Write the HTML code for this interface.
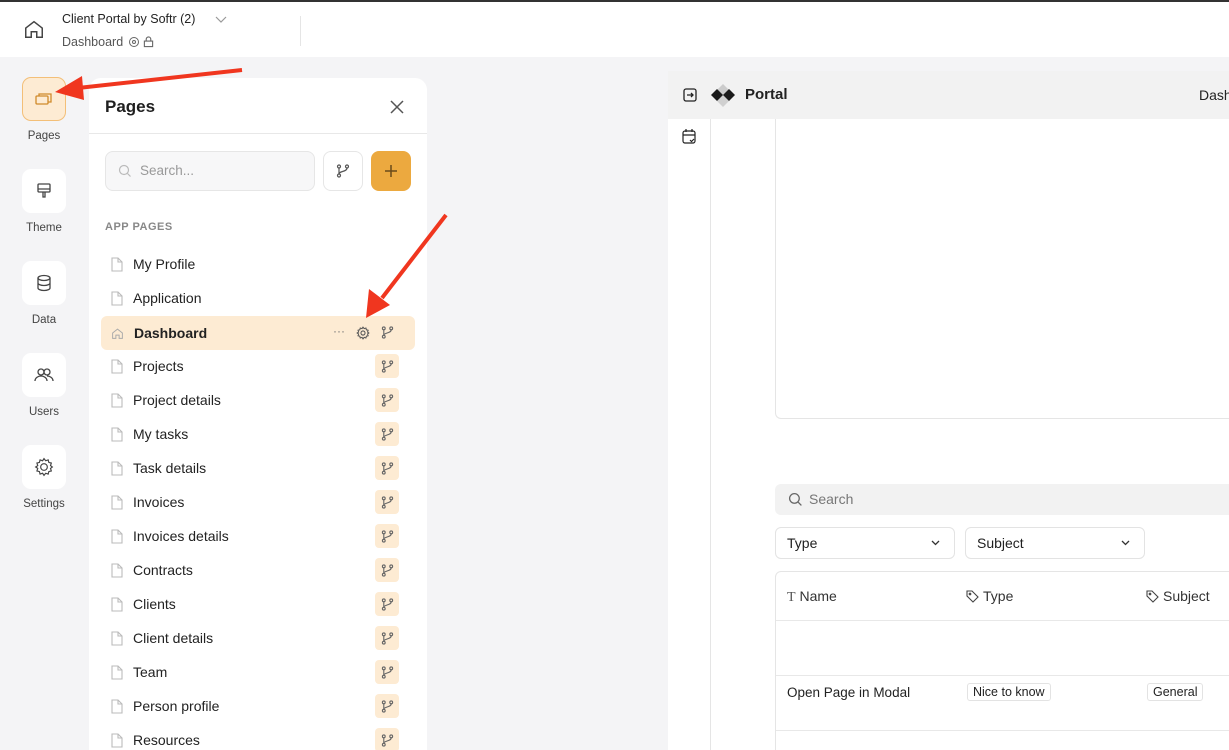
<!DOCTYPE html>
<html style="width:1229px;height:750px;overflow:hidden"><head><meta charset="utf-8"><style>
*{box-sizing:border-box;margin:0;padding:0}
body{width:1229px;height:750px;overflow:hidden;background:#f4f4f6;font-family:"Liberation Sans",sans-serif;color:#1f1f1f;position:relative}
.top{position:absolute;left:0;top:0;width:1229px;height:57px;background:#fff;border-top:2px solid #333}
.abs{position:absolute}
.nav{position:absolute;left:22px;width:44px;height:44px;border-radius:9px;background:#fff;display:flex;align-items:center;justify-content:center}
.navl{position:absolute;width:88px;left:0;text-align:center;font-size:11.5px;color:#444}
.panel{position:absolute;left:89px;top:78px;width:338px;height:672px;background:#fff;border-radius:12px 12px 0 0;overflow:hidden}
.row{position:absolute;left:12px;width:314px;height:34px;display:flex;align-items:center;font-size:14px;color:#222}
.row svg.f{margin-left:10px;margin-right:10px}
.badge{position:absolute;right:16px;top:5px;width:24px;height:24px;border-radius:4px;background:#fdebd3;display:flex;align-items:center;justify-content:center}
.main{position:absolute;left:668px;top:71px;width:561px;height:679px;background:#fff;overflow:hidden}
</style></head><body>
<div class="top">
<svg class="abs" style="left:23px;top:16px" width="22" height="22" viewBox="0 0 24 24" fill="none" stroke="#444" stroke-width="1.6"><path d="M3 11l9-7 9 7v10h-6v-6h-6v6H3z"/></svg>
<div class="abs" style="left:62px;top:10px;font-size:12.5px;color:#222">Client Portal by Softr (2)</div>
<svg class="abs" style="left:215px;top:14px" width="12" height="8" viewBox="0 0 12 8" fill="none" stroke="#999" stroke-width="1.2"><path d="M1 1l5 5 5-5"/></svg>
<div class="abs" style="left:62px;top:33px;font-size:12.5px;color:#555">Dashboard</div>
<svg class="abs" style="left:128px;top:34px" width="12" height="12" viewBox="0 0 24 24" fill="none" stroke="#666" stroke-width="2"><circle cx="12" cy="12" r="3"/><circle cx="12" cy="12" r="9"/></svg>
<svg class="abs" style="left:143px;top:34px" width="11" height="12" viewBox="0 0 12 12" fill="none" stroke="#666" stroke-width="1.2"><rect x="1.5" y="5" width="9" height="6"/><path d="M3.5 5V3a2.5 2.5 0 015 0v2"/></svg>
<div class="abs" style="left:300px;top:14px;width:1px;height:30px;background:#e5e5e5"></div>
</div>

<div class="nav" style="top:77px;background:#fdebd3;border:1px solid #f3bf78"><svg width="18" height="16" viewBox="0 0 18 16" fill="none" stroke="#d08a2a" stroke-width="1.3"><rect x="1" y="5" width="12" height="8" rx="1"/><path d="M4 5V3h12v8h-3"/></svg></div>
<div class="navl" style="top:130px">Pages</div>
<div class="nav" style="top:169px"><svg width="18" height="18" viewBox="0 0 18 18" fill="none" stroke="#444" stroke-width="1.3"><rect x="3" y="2" width="12" height="8" rx="1"/><path d="M3 7h12M8 10v5h2v-5"/></svg></div>
<div class="navl" style="top:222px">Theme</div>
<div class="nav" style="top:261px"><svg width="18" height="18" viewBox="0 0 18 18" fill="none" stroke="#444" stroke-width="1.3"><ellipse cx="9" cy="4" rx="6" ry="2.5"/><path d="M3 4v10c0 1.4 2.7 2.5 6 2.5s6-1.1 6-2.5V4M3 9c0 1.4 2.7 2.5 6 2.5s6-1.1 6-2.5"/></svg></div>
<div class="navl" style="top:314px">Data</div>
<div class="nav" style="top:353px"><svg width="20" height="16" viewBox="0 0 20 16" fill="none" stroke="#444" stroke-width="1.3"><circle cx="7" cy="5" r="3"/><circle cx="13" cy="5" r="3"/><path d="M1 14c0-3 3-5 6-5s6 2 6 5M13 9c3 0 6 2 6 5"/></svg></div>
<div class="navl" style="top:406px">Users</div>
<div class="nav" style="top:445px"><svg width="20" height="20" viewBox="0 0 24 24" fill="none" stroke="#444" stroke-width="1.4"><circle cx="12" cy="12" r="4"/><path d="M12 2l2 2.5 3-1 .8 3 3 .8-1 3L22 12l-2.2 1.7 1 3-3 .8-.8 3-3-1L12 22l-1.7-2.5-3 1-.8-3-3-.8 1-3L2 12l2.5-1.7-1-3 3-.8.8-3 3 1z"/></svg></div>
<div class="navl" style="top:498px">Settings</div>

<div class="panel">
<div class="abs" style="left:16px;top:19px;font-size:17px;font-weight:bold">Pages</div>
<svg class="abs" style="left:300px;top:21px" width="16" height="16" viewBox="0 0 16 16" stroke="#555" stroke-width="1.5"><path d="M2 2l12 12M14 2L2 14"/></svg>
<div class="abs" style="left:0;top:55px;width:338px;height:1px;background:#e8e8e8"></div>
<div class="abs" style="left:16px;top:73px;width:210px;height:40px;border:1px solid #e6e6e6;border-radius:8px;background:#f7f7f8"></div>
<svg class="abs" style="left:29px;top:86px" width="14" height="14" viewBox="0 0 14 14" fill="none" stroke="#bbb" stroke-width="1.2"><circle cx="6" cy="6" r="4.5"/><path d="M9.5 9.5l3 3"/></svg>
<div class="abs" style="left:51px;top:85px;font-size:13.5px;color:#999">Search...</div>
<div class="abs" style="left:234px;top:73px;width:40px;height:40px;border:1px solid #e6e6e6;border-radius:8px;display:flex;align-items:center;justify-content:center"><svg width="14" height="14" viewBox="0 0 14 14" fill="none" stroke="#555" stroke-width="1.2"><circle cx="3" cy="2.5" r="1.5"/><circle cx="3" cy="11.5" r="1.5"/><circle cx="11" cy="2.5" r="1.5"/><path d="M3 4v6M11 4c0 4-8 3-8 6"/></svg></div>
<div class="abs" style="left:282px;top:73px;width:40px;height:40px;border-radius:8px;background:#eca93f;display:flex;align-items:center;justify-content:center"><svg width="14" height="14" viewBox="0 0 14 14" stroke="#6a4a1a" stroke-width="1.5"><path d="M7 1v12M1 7h12"/></svg></div>
<div class="abs" style="left:16px;top:143px;font-size:11px;font-weight:bold;color:#888;letter-spacing:.5px">APP PAGES</div>
<div id="rows"></div>
</div>

<div class="main">
<div class="abs" style="left:0;top:0;width:561px;height:48px;background:#f2f2f2"></div>
<svg class="abs" style="left:15px;top:17px" width="14" height="14" viewBox="0 0 14 14" fill="none" stroke="#222" stroke-width="1.3"><rect x="1" y="1" width="12" height="12" rx="2"/><path d="M4 7h6M8 5l2 2-2 2"/></svg>
<svg class="abs" style="left:42px;top:12px" width="26" height="26" viewBox="0 0 26 26"><path d="M13 1l6 6-6 6-6-6z" fill="#ccc"/><path d="M13 12l6 6-6 6-6-6z" fill="#d0d0d0"/><path d="M7 6l6 6-6 6-6-6z" fill="#1a1a1a"/><path d="M19 6l6 6-6 6-6-6z" fill="#1a1a1a"/></svg>
<div class="abs" style="left:77px;top:15px;font-size:15px;font-weight:bold;color:#222">Portal</div>
<div class="abs" style="left:531px;top:16px;font-size:14px;color:#222">Dash</div>
<svg class="abs" style="left:14px;top:57px" width="14" height="16" viewBox="0 0 14 16" fill="none" stroke="#222" stroke-width="1.2"><rect x="1" y="3" width="12" height="12" rx="2"/><path d="M1 7h12M4 1v3M10 1v3M8 12l1.5 1.5L12 11"/></svg>
<div class="abs" style="left:42px;top:48px;width:1px;height:631px;background:#e5e5e5"></div>
<div class="abs" style="left:107px;top:48px;width:460px;height:300px;border-left:1px solid #e5e5e5;border-bottom:1px solid #e5e5e5;border-bottom-left-radius:6px"></div>
<div class="abs" style="left:107px;top:413px;width:454px;height:31px;background:#f2f2f2;border-radius:6px 0 0 6px"></div>
<svg class="abs" style="left:120px;top:421px" width="15" height="15" viewBox="0 0 14 14" fill="none" stroke="#666" stroke-width="1.2"><circle cx="6" cy="6" r="4.5"/><path d="M9.5 9.5l3 3"/></svg>
<div class="abs" style="left:141px;top:420px;font-size:14px;color:#777">Search</div>
<div class="abs" style="left:107px;top:456px;width:180px;height:32px;border:1px solid #e3e3e3;border-radius:6px"></div>
<div class="abs" style="left:119px;top:464px;font-size:14px">Type</div>
<svg class="abs" style="left:263px;top:469px" width="9" height="6" viewBox="0 0 9 6" fill="none" stroke="#333" stroke-width="1.3"><path d="M1 1l3.5 3.5L8 1"/></svg>
<div class="abs" style="left:297px;top:456px;width:180px;height:32px;border:1px solid #e3e3e3;border-radius:6px"></div>
<div class="abs" style="left:309px;top:464px;font-size:14px">Subject</div>
<svg class="abs" style="left:453px;top:469px" width="9" height="6" viewBox="0 0 9 6" fill="none" stroke="#333" stroke-width="1.3"><path d="M1 1l3.5 3.5L8 1"/></svg>
<div class="abs" style="left:107px;top:500px;width:470px;height:200px;border:1px solid #e5e5e5;border-radius:6px 0 0 0"></div>
<div class="abs" style="left:108px;top:549px;width:453px;height:1px;background:#e8e8e8"></div>
<div class="abs" style="left:108px;top:604px;width:453px;height:1px;background:#e8e8e8"></div>
<div class="abs" style="left:108px;top:659px;width:453px;height:1px;background:#e8e8e8"></div>
<div class="abs" style="left:119px;top:517px;font-size:14px;color:#333"><span style="font-family:'Liberation Serif';color:#555">T</span> Name</div>
<svg class="abs" style="left:298px;top:519px" width="13" height="13" viewBox="0 0 13 13" fill="none" stroke="#444" stroke-width="1.1"><path d="M1 1h5l6 6-5 5-6-6z"/><circle cx="4" cy="4" r=".8"/></svg>
<div class="abs" style="left:315px;top:517px;font-size:14px;color:#333">Type</div>
<svg class="abs" style="left:478px;top:519px" width="13" height="13" viewBox="0 0 13 13" fill="none" stroke="#444" stroke-width="1.1"><path d="M1 1h5l6 6-5 5-6-6z"/><circle cx="4" cy="4" r=".8"/></svg>
<div class="abs" style="left:495px;top:517px;font-size:14px;color:#333">Subject</div>
<div class="abs" style="left:119px;top:614px;font-size:13.5px;color:#222">Open Page in Modal</div>
<div class="abs" style="left:299px;top:612px;padding:1px 5px;border:1px solid #e3e3e3;border-radius:3px;font-size:12.5px">Nice to know</div>
<div class="abs" style="left:479px;top:612px;padding:1px 5px;border:1px solid #e3e3e3;border-radius:3px;font-size:12.5px">General</div>
</div>

<svg class="abs" style="left:0;top:0" width="1229" height="750">
<path d="M242 70L78 88" stroke="#f0361f" stroke-width="4"/>
<path d="M55 92L82 76L84 100z" fill="#f0361f"/>
<path d="M446 215L382 298" stroke="#f0361f" stroke-width="4"/>
<path d="M366 318L369 289L390 305z" fill="#f0361f"/>
</svg>

<script>
var names=["My Profile","Application","Dashboard","Projects","Project details","My tasks","Task details","Invoices","Invoices details","Contracts","Clients","Client details","Team","Person profile","Resources"];
var br='<svg width="13" height="13" viewBox="0 0 14 14" fill="none" stroke="#666" stroke-width="1.2"><circle cx="3" cy="2.5" r="1.5"/><circle cx="3" cy="11.5" r="1.5"/><circle cx="11" cy="2.5" r="1.5"/><path d="M3 4v6M11 4c0 4-8 3-8 6"/></svg>';
var file='<svg class="f" width="12" height="15" viewBox="0 0 12 15" fill="none" stroke="#bbb" stroke-width="1.1"><path d="M1 1h6l4 4v9H1z"/><path d="M7 1v4h4"/></svg>';
var home='<svg class="f" width="13" height="13" viewBox="0 0 24 24" fill="none" stroke="#aaa" stroke-width="1.8"><path d="M3 11l9-7 9 7v10h-6v-6h-6v6H3z"/></svg>';
var h='';
names.forEach(function(n,i){var top=169+34*i;
if(i==2){h+='<div class="row" style="top:'+(top+1)+'px;background:#fdebd3;border-radius:6px;font-weight:bold">'+home+n+'<span class="abs" style="left:232px;top:8px;color:#777;font-weight:normal;font-size:12px">···</span><svg class="abs" style="left:255px;top:10px" width="14" height="14" viewBox="0 0 24 24" fill="none" stroke="#555" stroke-width="1.8"><circle cx="12" cy="12" r="3.5"/><path d="M12 2l2 2.5 3-1 .8 3 3 .8-1 3L22 12l-2.2 1.7 1 3-3 .8-.8 3-3-1L12 22l-1.7-2.5-3 1-.8-3-3-.8 1-3L2 12l2.5-1.7-1-3 3-.8.8-3 3 1z"/></svg><span class="abs" style="left:280px;top:10px">'+br+'</span></div>';}
else{h+='<div class="row" style="top:'+top+'px">'+file+n+(i>2?'<div class="badge">'+br+'</div>':'')+'</div>';}
});
document.getElementById('rows').innerHTML=h;
</script>
</body></html>
